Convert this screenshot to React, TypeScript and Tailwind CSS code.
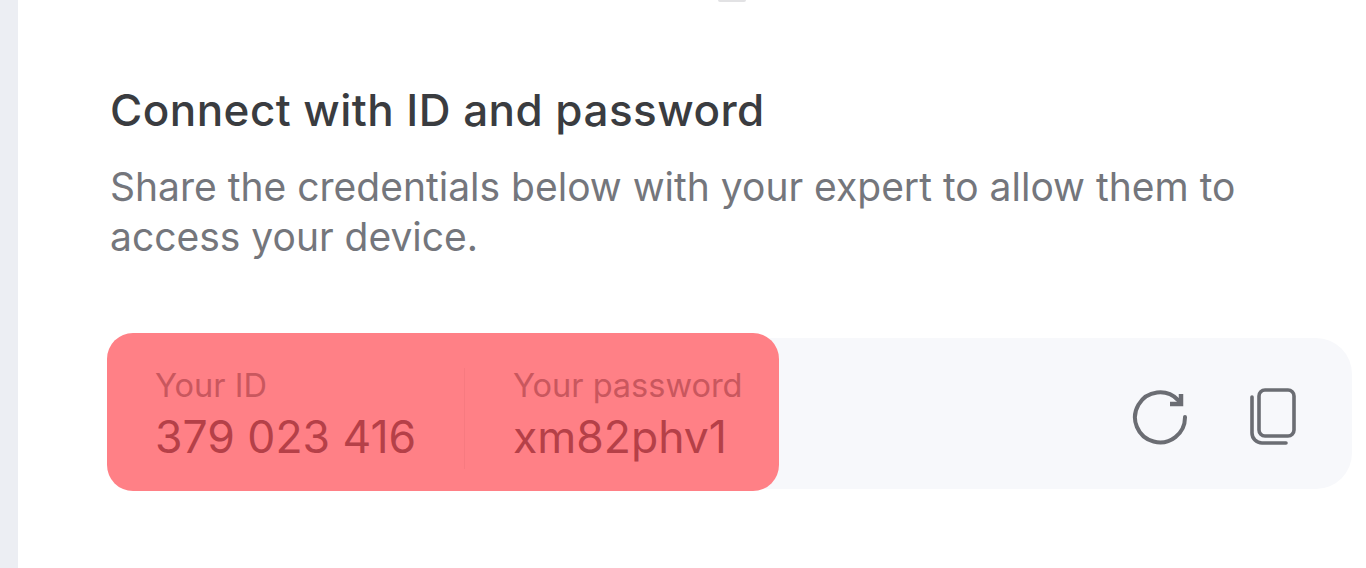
import React from 'react';

const RefreshIcon: React.FC<{ className?: string }> = ({ className }) => (
    <svg className={className} viewBox="0 0 56 56" fill="none" stroke="currentColor" strokeWidth="4" strokeLinecap="round">
        <path d="M53 28A25 25 0 1 1 46 11" />
        <path d="M49 5V15H38" strokeLinecap="butt" strokeWidth="4.5" />
    </svg>
);

const CopyStackIcon: React.FC<{ className?: string }> = ({ className }) => (
    <svg className={className} viewBox="0 0 46 57" fill="none" stroke="currentColor" strokeWidth="3.6" strokeLinecap="round">
        <rect x="9" y="2" width="35" height="46" rx="6" />
        <path d="M2 9v36a10 10 0 0 0 10 10h24" />
    </svg>
);

const Credential: React.FC<{ label: string; value: string }> = ({ label, value }) => (
    <div className="flex flex-col">
        <span className="text-[32.5px] leading-[36px] text-[#c9575e]">{label}</span>
        <span className="mt-[5px] text-[44.5px] leading-[56px] text-[#b54048]">{value}</span>
    </div>
);

export default function App() {
    return (
        <div className="h-[568px] w-[1366px] overflow-hidden bg-white font-['Inter',sans-serif]">
            <div className="flex h-full">
                <div className="w-[18px] shrink-0 bg-[#eceef3]" />
                <main className="flex-1 pl-[92px] pr-[14px]">
                    <div className="ml-[608px] h-[2px] w-[28px] rounded-b bg-[#e2e2e4]" />
                    <h2 className="mt-[83px] text-[44px] leading-[50px] font-medium tracking-[0.45px] text-[#3a3c40]">Connect with ID and password</h2>
                    <p className="mt-[27px] text-[39px] leading-[50px] text-[#74767c]">
                        Share the credentials below with your expert to allow them to access your device.
                    </p>
                    <div className="mt-[76px] flex h-[151px] items-center justify-between rounded-[36px] bg-[#f7f8fb] pr-[56px]">
                        <div className="mb-[4px] -ml-[3px] flex h-[158px] w-[672px] items-center rounded-[26px] bg-[#ff8086] pl-[48px] pt-[13px]">
                            <div className="w-[310px] border-r border-[#f77a80] pb-[4px]">
                                <Credential label="Your ID" value="379 023 416" />
                            </div>
                            <div className="pb-[4px] pl-[48px]">
                                <Credential label="Your password" value="xm82phv1" />
                            </div>
                        </div>
                        <div className="mt-[6px] flex items-center gap-[62px] text-[#6b6d73]">
                            <RefreshIcon className="h-[56px] w-[56px]" />
                            <CopyStackIcon className="h-[57px] w-[46px]" />
                        </div>
                    </div>
                </main>
            </div>
        </div>
    );
}
